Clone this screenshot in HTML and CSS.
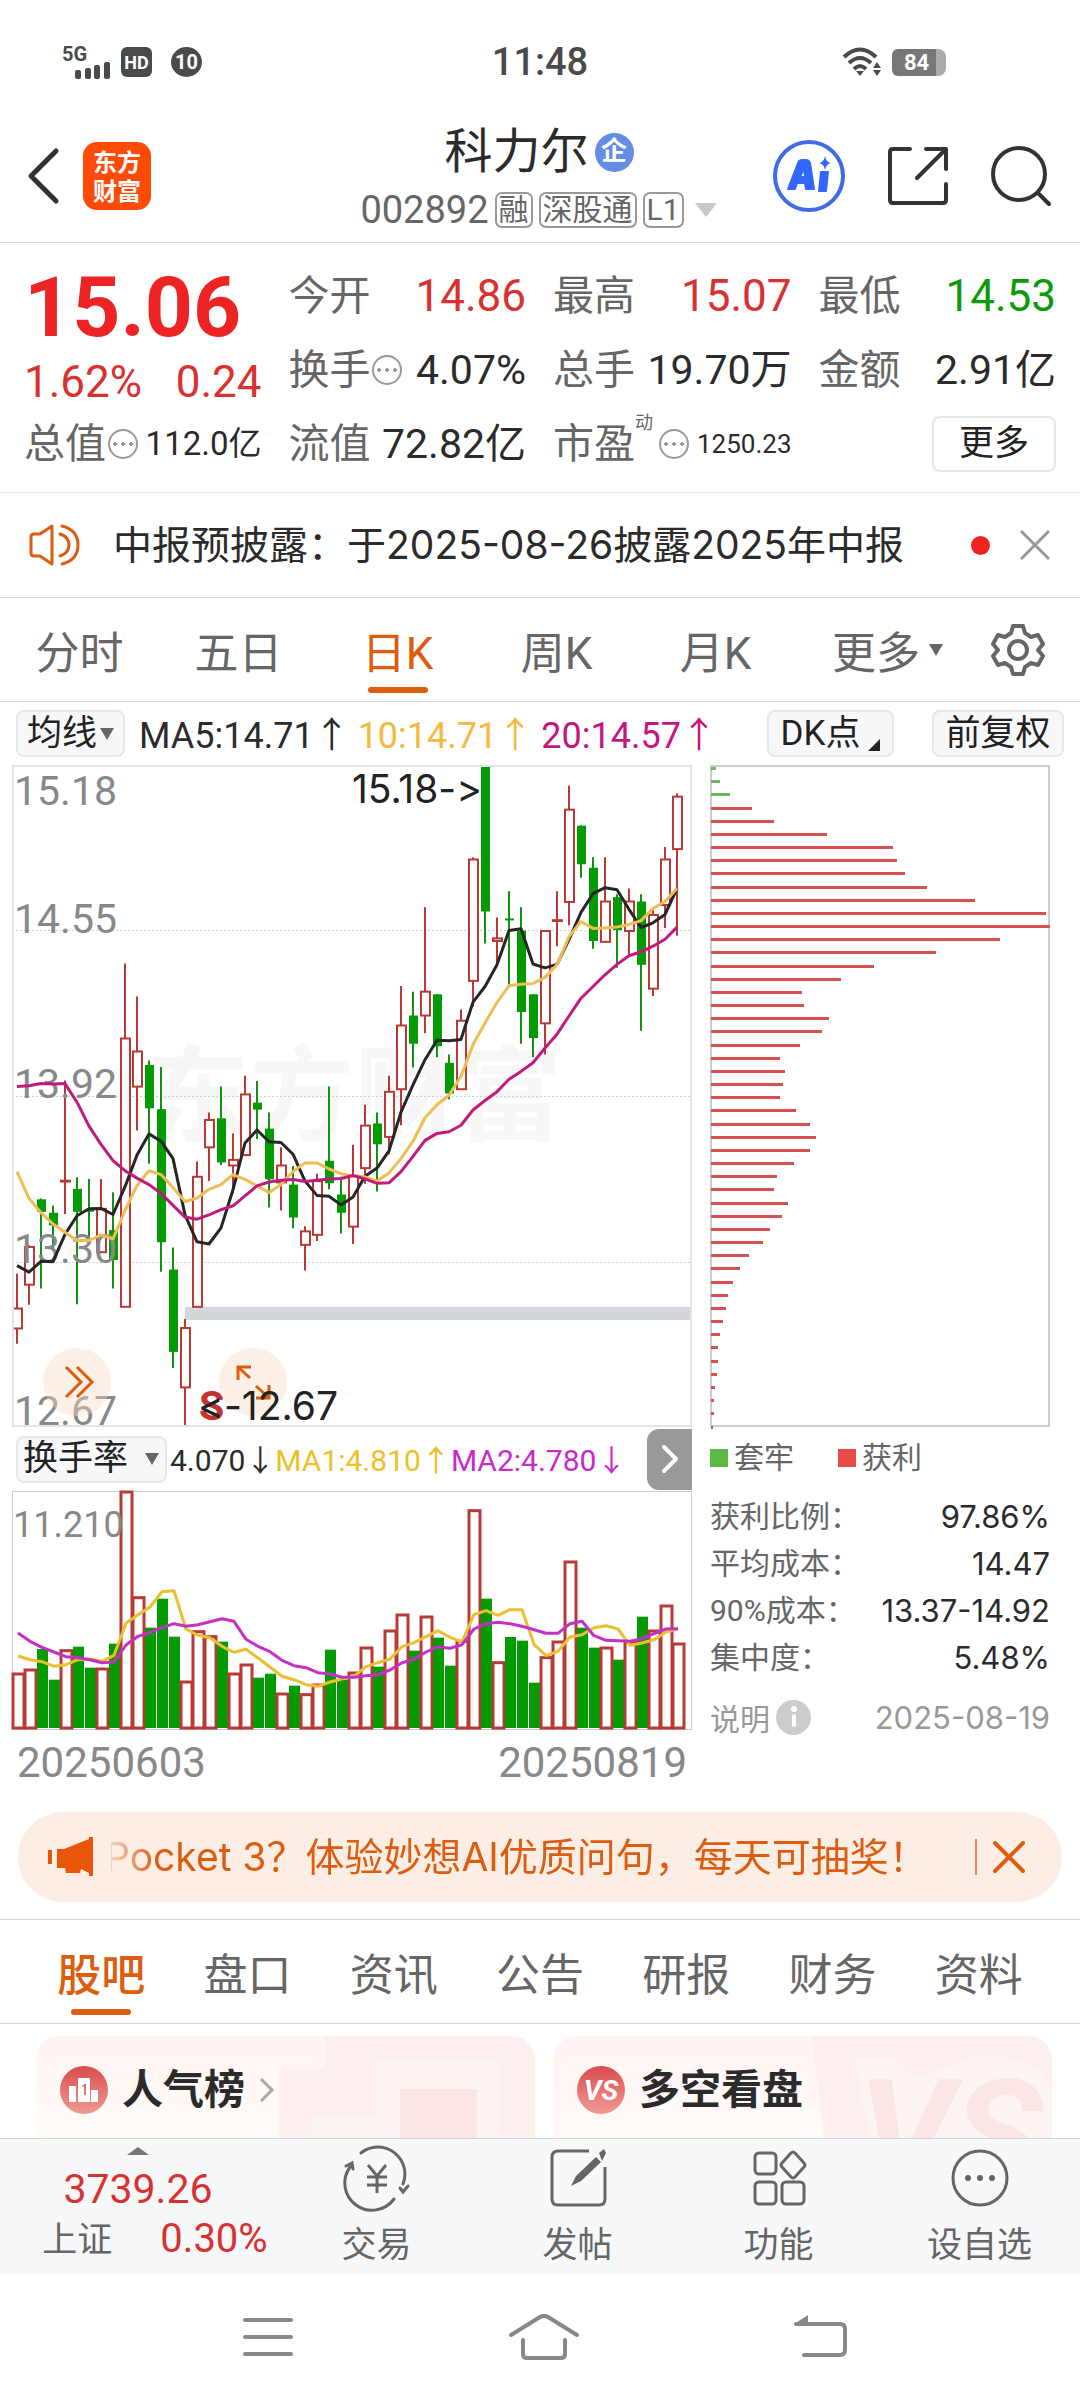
FILE: index.html
```html
<!DOCTYPE html>
<html lang="zh-CN">
<head>
<meta charset="utf-8">
<meta name="viewport" content="width=device-width, initial-scale=1">
<title>科力尔 002892</title>
<link rel="stylesheet" href="styles.css">
</head>
<body>
<div class="status">
  <div class="status-left">
    <svg width="50" height="36" viewBox="0 0 50 36" aria-label="5G">
      <text class="net" x="0" y="17">5G</text>
      <g fill="#4a4a4a"><rect x="13" y="26" width="6" height="9" rx="2"/><rect x="23" y="24" width="6" height="11" rx="2"/><rect x="32" y="21" width="6" height="14" rx="2"/><rect x="42" y="18" width="6" height="17" rx="2"/></g>
    </svg>
    <span class="hd">HD</span>
    <span class="count">10</span>
  </div>
  <time class="clock">11:48</time>
  <div class="status-right">
    <svg width="38" height="30" viewBox="0 0 38 30" fill="none" stroke="#4a4a4a" stroke-width="4">
      <path d="M2 10Q18-5 34 10M7 16Q18 6 29 16M12 22Q18 16 24 22"/><path d="M14 24h8l-4 5z" fill="#4a4a4a" stroke="none"/><path d="M31 21l4-6 4 6zM31 23h8l-4 6z" fill="#4a4a4a" stroke="none"/>
    </svg>
    <span class="battery">84</span>
  </div>
</div>

<header class="header">
  <div class="header-left">
    <button class="bare" aria-label="返回"><svg width="34" height="58" viewBox="0 0 34 58" fill="none" stroke="#333" stroke-width="5" stroke-linecap="round" stroke-linejoin="round"><path d="M30 4L5 29l25 25"/></svg></button>
    <a class="logo" href="#">东方<br>财富</a>
  </div>
  <div class="title">
    <h1>科力尔<span class="badge">企</span></h1>
    <button class="bare code">002892<span class="tag">融</span><span class="tag">深股通</span><span class="tag">L1</span><svg width="24" height="16" viewBox="0 0 24 16"><path d="M1 1h22L12 15z" fill="#c8c8c8"/></svg></button>
  </div>
  <div class="header-right">
    <button class="bare" aria-label="AI"><svg width="74" height="74" viewBox="0 0 74 74"><circle cx="37" cy="37" r="34" fill="#fff" stroke="#4169e8" stroke-width="4"/><g fill="#3366ff" stroke="#3366ff" stroke-width="2" stroke-linejoin="round"><path fill-rule="evenodd" d="M16 50l10-26q1-3 4-3h4q3 0 4 3l4 26h-8l-1-6h-8l-2 6zM28 38h5l-1-9z"/><path d="M49 33h7l-2 19h-7z"/></g><path d="M53 17q1 6 6 7-5 1-6 7-1-6-6-7 5-1 6-7z" fill="#3366ff"/></svg></button>
    <button class="bare" aria-label="分享"><svg width="62" height="62" viewBox="0 0 62 62" fill="none" stroke="#333" stroke-width="4" stroke-linecap="round" stroke-linejoin="round"><path d="M23 4H6q-3 0-3 3v48q0 3 3 3h50q3 0 3-3V39M39 4h20v20M58 5L30 33"/></svg></button>
    <button class="bare" aria-label="搜索"><svg width="62" height="62" viewBox="0 0 62 62" fill="none" stroke="#333" stroke-width="4" stroke-linecap="round"><circle cx="29" cy="29" r="26"/><path d="M48 48l11 11"/></svg></button>
  </div>
</header>

<section class="quote">
  <div class="price">
    <strong>15.06</strong>
    <div class="change"><span>1.62%</span><span>0.24</span></div>
  </div>
  <div class="cell"><span>今开</span><b class="up">14.86</b></div>
  <div class="cell"><span>最高</span><b class="up">15.07</b></div>
  <div class="cell"><span>最低</span><b class="down">14.53</b></div>
  <div class="cell"><span>换手</span><i class="dots"></i><b class="mid">4.07%</b></div>
  <div class="cell"><span>总手</span><b class="mid">19.70万</b></div>
  <div class="cell"><span>金额</span><b class="mid">2.91亿</b></div>
  <div class="cell"><span>总值</span><i class="dots"></i><b class="small">112.0亿</b></div>
  <div class="cell"><span>流值</span><b class="mid">72.82亿</b></div>
  <div class="cell"><span>市盈<sup>动</sup></span><i class="dots"></i><b class="tiny">1250.23</b></div>
  <div class="cell end"><button class="more">更多</button></div>
</section>

<section class="notice">
  <svg width="52" height="44" viewBox="0 0 52 44" fill="none" stroke="#dc5c10" stroke-width="3" stroke-linejoin="round" stroke-linecap="round"><path d="M23 3v38L11 33H5q-3 0-3-3V14q0-3 3-3h6zM31 11q9 3 9 11t-9 11M33 3q16 4 16 19T33 41"/></svg>
  <p>中报预披露：于2025-08-26披露2025年中报</p>
  <i class="red-dot"></i>
  <button class="bare" aria-label="关闭"><svg width="30" height="30" viewBox="0 0 30 30" fill="none" stroke="#999" stroke-width="3"><path d="M1 1l28 28M29 1L1 29"/></svg></button>
</section>

<nav class="periods">
  <button class="tab">分时</button>
  <button class="tab">五日</button>
  <button class="tab on">日K</button>
  <button class="tab">周K</button>
  <button class="tab">月K</button>
  <button class="tab">更多<svg width="16" height="14" viewBox="0 0 16 14"><path d="M1 1h14L8 13z" fill="#666"/></svg></button>
  <button class="tab" aria-label="设置"><svg width="54" height="54" viewBox="0 0 54 54" fill="none" stroke="#666" stroke-width="4" stroke-linejoin="round"><path d="M22 3h10l2 7 6 4 7-2 5 9-5 6v0l5 6-5 9-7-2-6 4-2 7H22l-2-7-6-4-7 2-5-9 5-6-5-6 5-9 7 2 6-4z"/><circle cx="27" cy="27" r="9"/></svg></button>
</nav>

<section class="averages">
  <button class="chip">均线<svg width="14" height="14" viewBox="0 0 14 14"><path d="M0 1h14L7 13z" fill="#666"/></svg></button>
  <p><span class="ma5">MA5:14.71<i>↑</i></span><span class="ma10">10:14.71<i>↑</i></span><span class="ma20">20:14.57<i>↑</i></span></p>
  <button class="chip dk">DK点<svg width="12" height="12" viewBox="0 0 12 12"><path d="M12 0v12H0z" fill="#222"/></svg></button>
  <button class="chip adjust">前复权</button>
</section>

<main class="charts">
  <div class="left">
    <svg id="kline" class="plot" viewBox="0 0 680 662" role="img" aria-label="日K线">
      <text class="watermark" x="134" y="368">东方财富</text>
      <g class="grid"><path d="M0 165.500H680M0 331.500H680M0 497.500H680"/></g>
      <rect x="173" y="542" width="507" height="13" fill="#d3d6db"/>
      <g id="candles"></g>
      <g class="axis"><text x="2" y="40">15.18</text><text x="2" y="168">14.55</text><text x="2" y="333">13.92</text><text x="2" y="498">13.30</text><text x="2" y="660">12.67</text></g>
      <g id="averages"></g>
      <text class="mark" x="470" y="38" text-anchor="end">15.18-&gt;</text>
      <text class="sell" x="187" y="655">S</text>
      <g class="tool"><circle cx="65" cy="617" r="34"/><path d="M54 602l15 15-15 15M65 602l15 15-15 15"/></g>
      <g class="tool"><circle cx="241" cy="617" r="34"/><path d="M226 615v-13h13M226 602l12 11M257 620v13h-13M257 633l-13-12"/></g>
      <text class="mark" x="326" y="655" text-anchor="end">&lt;-12.67</text>
      <rect class="frame" x="1" y="1" width="678" height="660"/>
    </svg>
    <div class="indicator">
      <button class="chip">换手率<svg width="16" height="14" viewBox="0 0 16 14"><path d="M1 1h14L8 13z" fill="#666"/></svg></button>
      <p><span>4.070<i>↓</i></span><span class="m1">MA1:4.810<i>↑</i></span><span class="m2">MA2:4.780<i>↓</i></span></p>
      <button class="next" aria-label="下一个"><svg width="20" height="30" viewBox="0 0 20 30" fill="none" stroke="#fff" stroke-width="4" stroke-linecap="round" stroke-linejoin="round"><path d="M4 3l12 12L4 27"/></svg></button>
    </div>
    <svg id="turnover" class="plot" viewBox="0 0 680 239" role="img" aria-label="换手率">
      <rect class="frame thin" x=".5" y=".5" width="679" height="238"/>
      <g id="bars"></g>
      <g class="axis small-axis"><text x="1" y="46">11.210</text></g>
      <g id="bar-averages"></g>
    </svg>
    <div class="dates"><span>20250603</span><span>20250819</span></div>
  </div>
  <div class="right">
    <svg id="cost" class="plot" viewBox="0 0 340 662" role="img" aria-label="筹码分布">
      <rect class="frame cost-frame" x="1" y="1" width="338" height="660"/>
    </svg>
    <div class="legend"><span><i class="green"></i>套牢</span><span><i class="red"></i>获利</span></div>
    <dl>
      <div><dt>获利比例：</dt><dd>97.86%</dd></div>
      <div><dt>平均成本：</dt><dd>14.47</dd></div>
      <div><dt>90%成本：</dt><dd>13.37-14.92</dd></div>
      <div><dt>集中度：</dt><dd>5.48%</dd></div>
    </dl>
    <div class="explain"><button class="bare">说明<span class="info"><svg width="8" height="22" viewBox="0 0 8 22" fill="#fff"><circle cx="4" cy="3" r="3"/><rect x="2" y="8" width="4" height="13" rx="2"/></svg></span></button><time>2025-08-19</time></div>
  </div>
</main>

<aside class="banner">
  <svg width="46" height="40" viewBox="0 0 46 40" fill="#e8560a"><path d="M0 13h4v14H0zM9 12h7L41 2V0h4v39h-4v-3l-8-4-1 4H18l-1-5H9z"/></svg>
  <p>Pocket 3？体验妙想AI优质问句，每天可抽奖！</p>
  <i></i>
  <button class="bare" aria-label="关闭"><svg width="34" height="34" viewBox="0 0 34 34" fill="none" stroke="#dc5c10" stroke-width="4" stroke-linecap="round"><path d="M3 3l28 28M31 3L3 31"/></svg></button>
</aside>

<nav class="sections">
  <button class="tab on">股吧</button>
  <button class="tab">盘口</button>
  <button class="tab">资讯</button>
  <button class="tab">公告</button>
  <button class="tab">研报</button>
  <button class="tab">财务</button>
  <button class="tab">资料</button>
</nav>

<section class="cards">
  <a class="card" href="#">
    <svg class="deco" width="290" height="102" viewBox="0 0 290 102" aria-hidden="true"><path d="M80 0h210v102H34V32h46z" fill="#fdf0ee"/><path d="M132 24h122v78H66V80h66z" fill="#fdf5f3"/><path d="M155 53h77v49h-77z" fill="#fbe6e5"/></svg>
    <span class="round"><svg width="30" height="26" viewBox="0 0 30 26" fill="#fff"><path d="M0 9h7v16H0zM22 13h7v12h-7z"/><path fill-rule="evenodd" d="M9 1h12v24H9zM13 10l2-1v9h2V7h-2l-2 2z"/></svg></span>
    <h2>人气榜</h2>
    <svg width="16" height="24" viewBox="0 0 16 24" fill="none" stroke="#aaa" stroke-width="3"><path d="M2 1l11 11L2 23"/></svg>
  </a>
  <a class="card" href="#">
    <svg class="deco" width="240" height="102" viewBox="0 0 240 102" aria-hidden="true"><path d="M0 0h240v102H12z" fill="#fdf0ee"/><path d="M42 22h38l24 20 60-22q70-2 76 40v42H58z" fill="#fdf5f3"/><text class="big-vs" x="46" y="150">VS</text></svg>
    <span class="round vs">VS</span>
    <h2>多空看盘</h2>
  </a>
</section>

<nav class="bottom">
  <a class="index" href="#">
    <svg width="22" height="8" viewBox="0 0 22 8"><path d="M0 8L11 0l11 8z" fill="#777"/></svg>
    <b>3739.26</b>
    <span>上证<em>0.30%</em></span>
  </a>
  <a href="#"><svg width="64" height="60" viewBox="0 0 64 60" fill="none" stroke="#666" stroke-width="3" stroke-linecap="round"><path d="M16 6A27 27 0 0 1 58 37M49 52A27 27 0 0 1 5 20M1 19l6-3 1 6M63 39l-5 6-3-4"/><path d="M23 18l9 11 9-11M32 29v17M22 30h20M22 38h20" stroke-linecap="butt"/></svg>交易</a>
  <a href="#"><svg width="64" height="60" viewBox="0 0 64 60" fill="none" stroke="#666" stroke-width="3"><path d="M43 4H12q-6 0-6 6v42q0 6 6 6h41q6 0 6-6V20"/><path d="M53 6l5-4 2 4-4 8zM50 10l5 5-20 19-10 5 5-10z" fill="#666" stroke="none"/></svg>发帖</a>
  <a href="#"><svg width="64" height="60" viewBox="0 0 64 60" fill="none" stroke="#666" stroke-width="3"><rect x="8" y="6" width="21" height="21" rx="4"/><rect x="8" y="35" width="21" height="22" rx="4"/><rect x="35" y="35" width="22" height="22" rx="4"/><path d="M44 6l-9 10q-2 2 0 4l9 10q2 2 4 0l9-10q2-2 0-4L48 6q-2-2-4 0z"/></svg>功能</a>
  <a href="#"><svg width="64" height="60" viewBox="0 0 64 60" fill="none" stroke="#666" stroke-width="3"><circle cx="32" cy="31" r="27"/><g fill="#666" stroke="none"><circle cx="20" cy="31" r="3"/><circle cx="32" cy="31" r="3"/><circle cx="44" cy="31" r="3"/></g></svg>设自选</a>
</nav>

<div class="system">
  <button class="bare" aria-label="最近任务"><svg width="72" height="46" viewBox="0 0 72 46" fill="none" stroke="#888" stroke-width="4" stroke-linecap="round"><path d="M13 6h46M13 23h46M13 40h46"/></svg></button>
  <button class="bare" aria-label="主屏幕"><svg width="72" height="46" viewBox="0 0 72 46" fill="none" stroke="#888" stroke-width="4" stroke-linecap="round"><path d="M3 21L32 3q4-2 8 0l29 18M15 26v14q0 4 4 4h34q4 0 4-4V26"/></svg></button>
  <button class="bare" aria-label="返回上级"><svg width="72" height="46" viewBox="0 0 72 46" fill="none" stroke="#888" stroke-width="4" stroke-linecap="round"><path d="M12 10h44q5 0 5 5v21q0 5-5 5H20"/><path d="M10 10L24 1v9z" fill="#888" stroke="none"/></svg></button>
</div>
<script src="chart.js"></script>
</body>
</html>
```
FILE: styles.css
```css
* { box-sizing: border-box; }
body {
  margin: 0;
  min-height: 100vh;
  display: flex;
  flex-direction: column;
  background: #fff;
  color: #2b2b2b;
  font-family: Roboto, "Noto Sans CJK SC", sans-serif;
  font-size: 40px;
}
h1, h2, p, dl, dd { margin: 0; font-weight: 400; }
i, em { font-style: normal; }
a { color: inherit; text-decoration: none; }
b { font-weight: 400; }
svg { flex: none; overflow: visible; }
button { font: inherit; color: inherit; padding: 0; cursor: pointer; }
.bare { border: 0; background: none; display: flex; align-items: center; }

/* status bar */
.status {
  display: grid;
  grid-template-columns: 1fr auto 1fr;
  align-items: center;
  height: 110px;
  padding: 14px 134px 0 62px;
  color: #4a4a4a;
}
.status-left, .status-right { display: flex; align-items: center; }
.status-right { justify-content: flex-end; gap: 12px; }
.status-left { gap: 9px; }
.net { font: 700 20px Roboto, sans-serif; fill: #4a4a4a; }
.hd, .count {
  display: grid;
  place-items: center;
  width: 31px;
  height: 30px;
  border-radius: 6px;
  background: #4a4a4a;
  color: #fff;
  font-size: 18px;
  font-weight: 700;
}
.count { border-radius: 50%; margin-left: 10px; font-size: 20px; }
.clock { font-size: 38px; font-weight: 500; padding-left: 72px; }
.battery {
  width: 54px;
  height: 27px;
  border-radius: 6px 8px 8px 6px;
  background: linear-gradient(90deg, #777 44px, #aaa 44px);
  color: #fff;
  font-size: 22px;
  font-weight: 700;
  line-height: 27px;
  padding-left: 12px;
}

/* title bar */
.header {
  display: grid;
  grid-template-columns: 1fr auto 1fr;
  align-items: center;
  min-height: 133px;
  padding: 0 28px 0 26px;
  border-bottom: 1px solid #d5d5d5;
}
.header-left, .header-right { display: flex; align-items: center; }
.header-left { gap: 23px; }
.header-right { justify-content: flex-end; gap: 41px; }
.logo {
  width: 68px;
  height: 68px;
  border-radius: 14px;
  background: #ff4b05;
  color: #fff;
  font: 700 24px/29px "Noto Sans CJK SC", sans-serif;
  text-align: center;
  padding-top: 4px;
}
.title { display: flex; flex-direction: column; align-items: center; padding-top: 8px; }
h1 { display: flex; align-items: center; gap: 6px; font-size: 48px; line-height: 60px; }
.badge {
  width: 39px;
  height: 39px;
  border-radius: 50%;
  background: #648ee4;
  color: #fff;
  font-size: 26px;
  font-weight: 700;
  line-height: 37px;
  text-align: center;
}
.code { gap: 6px; color: #666; font-size: 38px; line-height: 56px; }
.tag {
  border: 2px solid #999;
  border-radius: 7px;
  padding: 0 2px;
  font-size: 30px;
  line-height: 32px;
}
.code svg { margin-left: 4px; }

/* quote grid */
.quote {
  display: grid;
  grid-template-columns: repeat(4, 1fr);
  grid-auto-rows: 74px;
  column-gap: 27px;
  padding: 16px 24px 11px;
  border-bottom: 1px solid #e6e6e6;
}
.price { grid-row: span 2; color: #ee2424; }
.price strong { display: block; font-size: 84px; line-height: 98px; font-weight: 700; }
.change { display: flex; justify-content: space-between; font-size: 44px; line-height: 50px; color: #d93030; }
.cell { display: flex; align-items: center; color: #666; font-size: 41px; line-height: 60px; white-space: nowrap; }
.cell b { margin-left: auto; font-size: 44px; color: #2b2b2b; }
.cell b.up { color: #d93030; }
.cell b.down { color: #0a9a0a; }
.cell b.mid { font-size: 41px; }
.cell b.small { font-size: 33px; }
.cell b.tiny { font-size: 26px; margin-left: 8px; }
.cell span { position: relative; }
sup { position: absolute; left: 100%; top: 0; font-size: 18px; line-height: 18px; }
.cell span:has(sup) { margin-right: 22px; }
.dots {
  width: 30px;
  height: 30px;
  margin-left: 2px;
  border: 2px solid #999;
  border-radius: 50%;
  background: radial-gradient(circle, #999 2px, transparent 2px) 1px center / 8px 100% repeat-x;
  background-clip: content-box;
}
.end { justify-content: flex-end; }
.more {
  width: 124px;
  height: 56px;
  border: 2px solid #e6e6e6;
  border-radius: 8px;
  background: #fff;
  color: #222;
  font-size: 35px;
  line-height: 48px;
}

/* notice */
.notice {
  display: flex;
  align-items: center;
  min-height: 105px;
  padding: 0 30px 0 29px;
  border-bottom: 1px solid #d5d5d5;
  white-space: nowrap;
}
.notice p, .banner p { font-family: Inter, "Noto Sans CJK SC", sans-serif; font-size: 39px; line-height: 60px; }
.notice p { flex: 1; padding-left: 32px; }
.red-dot { width: 19px; height: 19px; border-radius: 50%; background: #ee2424; margin-right: 30px; }

/* tabs */
.periods, .sections { display: grid; min-height: 104px; border-bottom: 1px solid #d5d5d5; }
.periods { grid-template-columns: repeat(5, 159fr) 186fr 73fr; padding-right: 26px; }
.sections { grid-template-columns: repeat(7, 1fr); border-top: 1px solid #d5d5d5; padding: 0 28px; min-height: 105px; }
.tab {
  position: relative;
  display: flex;
  align-items: center;
  justify-content: center;
  gap: 8px;
  border: 0;
  background: none;
  color: #666;
  font-size: 44px;
}
.tab.on { color: #dc5c10; }
.sections .on { font-weight: 500; }
.tab.on::after {
  content: "";
  position: absolute;
  left: calc(50% - 30px);
  bottom: 8px;
  width: 60px;
  height: 6px;
  border-radius: 3px;
  background: #dc5c10;
}

/* moving averages */
.averages { display: flex; align-items: center; min-height: 63px; padding: 0 16px; white-space: nowrap; }
.averages p { flex: 1; display: flex; gap: 8px; padding-left: 14px; font-size: 36px; line-height: 50px; }
.averages i, .indicator i { font-family: "Noto Sans CJK SC", sans-serif; }
.ma10 { color: #f5b942; }
.ma20 { color: #c4157f; }
.chip {
  display: flex;
  align-items: center;
  justify-content: center;
  gap: 3px;
  height: 47px;
  padding: 0 9px;
  border: 2px solid #e6e8eb;
  border-radius: 8px;
  background: #f7f8fa;
  color: #222;
  font-size: 35px;
  line-height: 40px;
}
.dk { width: 127px; margin-right: 38px; padding: 0 4px; gap: 8px; }
.dk svg { align-self: flex-end; margin-bottom: 4px; }
.adjust { width: 132px; }

/* charts */
.charts { display: grid; grid-template-columns: 680fr 340fr; column-gap: 18px; padding: 0 30px 0 12px; }
.left, .right { min-width: 0; }
.plot { display: block; width: 100%; height: auto; font-family: Roboto, "Noto Sans CJK SC", sans-serif; }
.frame { fill: none; stroke: #e4e4e4; stroke-width: 2; }
.thin { stroke: #ccc; stroke-width: 1; }
.cost-frame { stroke: #ccc; }
.grid { stroke: #d0d0d0; stroke-width: 1; stroke-dasharray: 2 2; }
.axis { font-size: 41px; fill: #888; }
.small-axis { font-size: 36px; }
.mark { font-family: Inter, sans-serif; font-size: 39px; font-feature-settings: "calt" 0; fill: #222; }
.sell { font-size: 41px; font-weight: 700; fill: #c43232; }
.watermark { font-size: 104px; font-weight: 700; fill: #f7f7f7; }
.tool circle { fill: #fbd9c4; fill-opacity: .4; }
.tool path { fill: none; stroke: #dc5c10; stroke-width: 3; }
.rise { fill: #fff; stroke: #b83a36; stroke-width: 2; }
#bars .rise { stroke-width: 3; }
.fall { fill: #029c02; }
.wick { stroke-width: 2; }
.wick.r { stroke: #b83a36; }
.wick.g { stroke: #149014; }
.line { fill: none; stroke-width: 3; stroke-linejoin: round; }
.indicator { display: flex; align-items: center; height: 64px; padding-left: 4px; white-space: nowrap; }
.indicator .chip { width: 151px; padding: 0 5px; justify-content: space-between; }
.indicator p { flex: 1; display: flex; padding-left: 3px; font-size: 30px; line-height: 50px; }
.m1 { color: #ecc02a; }
.m2 { color: #c82acb; }
.next { display: grid; place-items: center; width: 45px; height: 61px; border: 0; border-radius: 12px 0 0 12px; background: #999; }
.dates { display: flex; justify-content: space-between; padding: 0 5px; font-size: 42px; line-height: 66px; color: #888; }

.legend { display: flex; gap: 44px; font-size: 30px; line-height: 62px; color: #666; }
.legend span { display: flex; align-items: center; gap: 6px; }
.legend i { width: 18px; height: 18px; }
.green { background: #5cb946; }
.red { background: #e84a4a; }
dl { padding-top: 4px; }
dl div { display: flex; justify-content: space-between; line-height: 47px; white-space: nowrap; }
dd, .explain { font-family: Inter, "Noto Sans CJK SC", sans-serif; font-size: 31px; }
dt { font-size: 30px; color: #666; }
.explain { display: flex; justify-content: space-between; align-items: center; height: 48px; margin-top: 12px; color: #999; }
.explain button { gap: 6px; font-size: 30px; }
.info { display: grid; place-items: center; width: 35px; height: 35px; border-radius: 50%; background: #ccc; }

/* promotion */
.banner {
  display: flex;
  align-items: center;
  min-height: 90px;
  margin: 16px 18px 17px;
  padding: 0 36px 0 30px;
  border-radius: 45px;
  background: #fdeee5;
  color: #dc5c10;
}
.banner p {
  flex: 1;
  min-width: 0;
  height: 60px;
  overflow: hidden;
  margin-left: 17px;
  text-indent: -6px;
  white-space: nowrap;
  -webkit-mask-image: linear-gradient(90deg, rgba(0, 0, 0, .2), #000 46px);
  mask-image: linear-gradient(90deg, rgba(0, 0, 0, .2), #000 46px);
}
.banner i { width: 2px; height: 36px; background: #dc5c10; opacity: .7; margin-right: 15px; }

/* cards */
.cards { display: grid; grid-template-columns: 1fr 1fr; gap: 18px; padding: 12px 28px 0 36px; }
.card {
  position: relative;
  display: flex;
  align-items: center;
  gap: 14px;
  padding: 30px 24px 24px;
  overflow: hidden;
  border-radius: 24px 24px 0 0;
  background: linear-gradient(#fff5f3, #fffaf8);
}
.card > * { position: relative; }
.card .deco { position: absolute; right: 0; top: 0; }
.card h2 { font-size: 41px; line-height: 48px; font-weight: 700; color: #2b2b2b; }
.round { display: grid; place-items: center; width: 48px; height: 48px; border-radius: 50%; background: linear-gradient(#d84c4c, #f09a94); color: #fff; }
.vs { font-size: 28px; font-weight: 700; font-style: italic; }
.big-vs { font: italic 700 150px Roboto, sans-serif; fill: #fbe6e5; }

/* toolbar */
.bottom {
  display: grid;
  grid-template-columns: 276fr repeat(4, 201fr);
  min-height: 136px;
  border-top: 1px solid #d5d5d5;
  background: #f7f8fa;
  color: #666;
  font-size: 35px;
  line-height: 50px;
}
.bottom a { display: flex; flex-direction: column; align-items: center; gap: 14px; padding-top: 8px; }
.bottom .index { gap: 0; }
.index b { margin-top: 9px; font-size: 41px; color: #d93030; }
.index span { padding-left: 34px; }
.index em { margin-left: 48px; font-size: 40px; color: #d93030; }

.system { flex: 1; display: flex; align-items: center; justify-content: space-between; min-height: 126px; padding: 0 224px 0 232px; }
```
FILE: chart.js
```js
const SVG = "http://www.w3.org/2000/svg";
const STEP = 12;

function add(parent, name, attrs) {
  const node = document.createElementNS(SVG, name);
  for (const key in attrs) node.setAttribute(key, attrs[key]);
  parent.appendChild(node);
}

function drawLine(parent, values, color, x0, toY) {
  const points = values.map((v, i) => (x0 + i * STEP) + "," + toY(v).toFixed(1)).join(" ");
  add(parent, "polyline", { class: "line", points, stroke: color });
}

// Levels run downwards: 12 is the top price (15.18), 1537 the bottom (12.67).
// Each day: direction, high, body top, body bottom, low.
const days = `r 1186 1266 1312 1347|r 1120 1124 1211 1257|g 1012 1014 1043 1220|g 1028 1045 1074 1130|r 740 971 973 1048
g 963 990 1043 1256|g 967 1038 1042 1110|r 967 1036 1136 1136|g 998 1085 1154 1220|r 470 643 1262 1262
r 546 673 754 855|g 694 704 804 932|g 709 806 1113 1181|g 1125 1176 1366 1403|r 1290 1311 1448 1537
r 927 962 1262 1262|r 814 831 894 972|g 754 827 929 935|r 862 923 936 1000|r 729 772 912 912
g 741 791 807 875|g 814 851 968 1033|r 894 936 975 1040|g 937 980 1056 1081|r 1076 1088 1119 1178
r 955 972 1096 1110|g 754 925 977 991|g 962 1003 1045 1093|r 888 960 1077 1117|r 796 844 942 978
g 814 839 887 996|r 729 766 870 910|r 522 613 760 843|g 535 590 655 710|r 340 535 590 631
g 541 541 661 686|g 680 699 770 783|r 576 602 760 760|r 225 230 510 570|g 12 12 350 424
r 364 412 418 470|g 303 366 369 525|g 340 394 582 655|g 541 541 642 686|r 394 395 608 680
r 303 370 372 430|r 60 115 328 382|g 151 152 241 272|g 225 249 418 436|r 225 327 420 420
g 310 317 393 480|r 297 327 395 450|g 310 327 473 625|r 345 358 528 545|r 201 230 335 388
r 78 85 206 406`.split(/[|\n]/).map(row => row.split(" "));

const ma5 = [1167,1182,1157,1158,1095,1052,1036,1035,1049,985,912,863,880,920,1050,1112,1117,1080,992,884,854,881,883,910,972,1005,1007,1027,1009,961,942,902,813,750,692,647,648,645,559,523,473,394,390,471,480,472,415,352,309,295,300,345,387,376,357,297];
const ma10 = [950,1012,1045,1071,1090,1109,1109,1096,1105,1040,982,948,957,987,1019,1011,991,980,957,968,983,998,980,950,930,930,944,955,960,962,972,953,920,880,826,796,774,730,657,607,560,521,518,516,502,473,408,373,389,388,386,380,371,343,327,297];
const ma20 = [754,752,747,748,747,790,845,887,925,948,965,980,1000,1028,1055,1060,1050,1038,1029,1006,983,974,970,968,973,970,967,966,959,967,977,976,950,915,878,862,858,843,808,786,766,737,719,699,665,633,591,550,523,496,472,452,443,430,414,386];

const priceY = v => (v - 12) / 1525 * 661;
const candles = document.getElementById("candles");
days.forEach(([dir, high, top, bottom, low], i) => {
  const x = 5 + i * STEP;
  const y = priceY(+top), h = priceY(+bottom) - y;
  add(candles, "line", { class: "wick " + dir, x1: x, x2: x, y1: priceY(+high), y2: priceY(+low) });
  if (dir === "g") add(candles, "rect", { class: "fall", x: x - 4, y, width: 9, height: Math.max(h, 2) });
  else add(candles, "rect", { class: "rise", x: x - 4, y, width: 9, height: h });
});
const averages = document.getElementById("averages");
drawLine(averages, ma5, "#262626", 5, priceY);
drawLine(averages, ma10, "#f0bd55", 5, priceY);
drawLine(averages, ma20, "#c01a7c", 5, priceY);

// Turnover levels, 214 at the top of the frame and 928 at its foot.
const volume = [763,751,688,780,693,681,744,748,672,217,534,624,537,651,787,636,651,666,763,736,774,762,823,798,825,796,690,780,760,685,741,634,586,693,592,654,738,665,273,537,729,652,663,789,714,667,427,624,684,685,720,669,591,634,559,673];
const m1 = [709,720,726,740,735,720,718,725,707,611,585,562,516,513,628,647,654,680,698,689,715,742,770,780,795,800,787,778,770,741,729,718,681,669,651,633,653,667,585,573,587,570,570,674,708,695,652,645,624,618,628,677,670,660,637,628];
const m2 = [640,665,683,697,711,714,720,729,727,676,650,638,624,612,620,615,606,597,605,659,680,696,722,738,744,759,763,773,773,768,765,751,729,719,697,681,686,675,628,612,608,612,620,630,641,641,612,605,648,662,663,665,657,642,628,627];
const volumeY = v => (v - 214) / 3;
const bars = document.getElementById("bars");
volume.forEach((v, i) => {
  const x = 6 + i * STEP, y = volumeY(v);
  if (days[i][0] === "g") add(bars, "rect", { class: "fall", x: x - 5, y, width: 11, height: 237 - y });
  else add(bars, "rect", { class: "rise", x: x - 5, y, width: 11, height: 237 - y });
});
const barAverages = document.getElementById("bar-averages");
drawLine(barAverages, m1, "#e8c030", 6, volumeY);
drawLine(barAverages, m2, "#c430c6", 6, volumeY);

// Holdings at each price step, as bar lengths out of 339.
const holdings = [5,9,19,41,63,116,182,186,194,216,264,335,339,289,225,163,130,91,93,118,111,89,69,74,72,69,85,99,105,99,83,66,63,77,71,59,52,38,29,22,17,15,12,9,7,7,6,4,3,3,2];
const cost = document.getElementById("cost");
holdings.forEach((width, i) => {
  add(cost, "rect", { x: 1, y: Math.round(2 + i * 13.17), width, height: 3, fill: i < 3 ? "#6ab85a" : "#d85050" });
});
```
